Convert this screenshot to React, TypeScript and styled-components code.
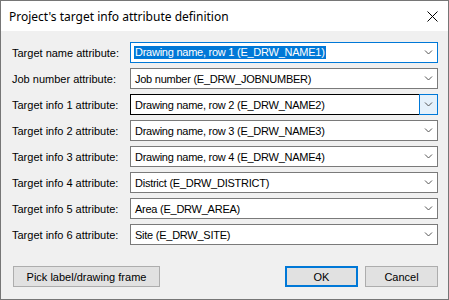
import { createGlobalStyle, styled } from "styled-components";

const Global = createGlobalStyle`
  html, body {
    margin: 0;
    padding: 0;
    background: #ffffff;
  }
  * {
    box-sizing: border-box;
  }
`;

type Row = { label: string; value: string; state?: "focus" | "hover" };

const rows: Row[] = [
  { label: "Target name attribute:", value: "Drawing name, row 1 (E_DRW_NAME1)", state: "focus" },
  { label: "Job number attribute:", value: "Job number (E_DRW_JOBNUMBER)" },
  { label: "Target info 1 attribute:", value: "Drawing name, row 2 (E_DRW_NAME2)", state: "hover" },
  { label: "Target info 2 attribute:", value: "Drawing name, row 3 (E_DRW_NAME3)" },
  { label: "Target info 3 attribute:", value: "Drawing name, row 4 (E_DRW_NAME4)" },
  { label: "Target info 4 attribute:", value: "District (E_DRW_DISTRICT)" },
  { label: "Target info 5 attribute:", value: "Area (E_DRW_AREA)" },
  { label: "Target info 6 attribute:", value: "Site (E_DRW_SITE)" },
];

const Chevron = () => (
  <svg width="9" height="5" viewBox="0 0 9 5">
    <path d="M1 0.5 L4.5 4 L8 0.5" fill="none" stroke="#555" strokeWidth="1" />
  </svg>
);

export default function App() {
  return (
    <>
      <Global />
      <Window>
        <TitleBar>
          <Title>Project's target info attribute definition</Title>
          <Close>
            <svg width="11" height="11" viewBox="0 0 11 11">
              <path d="M0.5 0.5 L10.5 10.5 M10.5 0.5 L0.5 10.5" stroke="#000" strokeWidth="1" />
            </svg>
          </Close>
        </TitleBar>
        <Body>
          <Form>
            {rows.map((row) => (
              <FieldRow key={row.label}>
                <Label>{row.label}</Label>
                <Combo $state={row.state}>
                  <ComboText>
                    {row.state === "focus" ? <Selected>{row.value}</Selected> : row.value}
                  </ComboText>
                  <DropButton $hover={row.state === "hover"}>
                    <Chevron />
                  </DropButton>
                </Combo>
              </FieldRow>
            ))}
          </Form>
          <Footer>
            <Button $width={147}>Pick label/drawing frame</Button>
            <Spacer />
            <Button $width={73} $default>
              OK
            </Button>
            <Button $width={73}>Cancel</Button>
          </Footer>
        </Body>
      </Window>
    </>
  );
}

const Window = styled.div`
  width: 449px;
  height: 300px;
  border: 1px solid #767676;
  background: #f0f0f0;
  display: flex;
  flex-direction: column;
  font-family: Tahoma, "Liberation Sans", "DejaVu Sans", sans-serif;
  font-size: 11px;
  color: #000;
`;

const TitleBar = styled.div`
  height: 30px;
  background: #ffffff;
  display: flex;
  align-items: center;
  padding-left: 8px;
  padding-right: 10px;
`;

const Title = styled.div`
  flex: 1;
  font-family: "Segoe UI", "Noto Sans", "Open Sans", sans-serif;
  font-size: 12px;
  color: #000;
`;

const Close = styled.div`
  display: flex;
  align-items: center;
`;

const Body = styled.div`
  flex: 1;
  display: flex;
  flex-direction: column;
  padding: 11px 10px 12px 11px;
`;

const Form = styled.div`
  display: flex;
  flex-direction: column;
  gap: 5px;
`;

const FieldRow = styled.div`
  display: grid;
  grid-template-columns: 118px 1fr;
  align-items: center;
  height: 21px;
`;

const Label = styled.div`
  white-space: nowrap;
`;

const Combo = styled.div<{ $state?: "focus" | "hover" }>`
  height: 21px;
  display: flex;
  align-items: stretch;
  background: #fff;
  border: 1px solid
    ${(p) => (p.$state === "focus" ? "#0078d7" : p.$state === "hover" ? "#000000" : "#7a7a7a")};
`;

const ComboText = styled.div`
  flex: 1;
  display: flex;
  align-items: center;
  padding-left: 4px;
  white-space: nowrap;
  overflow: hidden;
  letter-spacing: -0.25px;
`;

const Selected = styled.span`
  background: #0078d7;
  color: #fff;
  margin-left: -1px;
  padding: 0 1px;
  line-height: 13px;
`;

const DropButton = styled.div<{ $hover?: boolean }>`
  display: flex;
  align-items: center;
  justify-content: center;
  margin: ${(p) => (p.$hover ? "-1px -1px -1px 0" : "0")};
  background: ${(p) => (p.$hover ? "#e5f1fb" : "transparent")};
  border: ${(p) => (p.$hover ? "1px solid #0078d7" : "none")};
  width: ${(p) => (p.$hover ? "19px" : "17px")};
`;

const Footer = styled.div`
  margin-top: auto;
  display: flex;
  align-items: center;
  gap: 7px;
  padding-left: 1px;
`;

const Spacer = styled.div`
  flex: 1;
`;

const Button = styled.div<{ $width: number; $default?: boolean }>`
  width: ${(p) => p.$width}px;
  height: 21px;
  display: flex;
  align-items: center;
  justify-content: center;
  background: #e1e1e1;
  border: ${(p) => (p.$default ? "2px solid #0078d7" : "1px solid #adadad")};
  white-space: nowrap;
`;
